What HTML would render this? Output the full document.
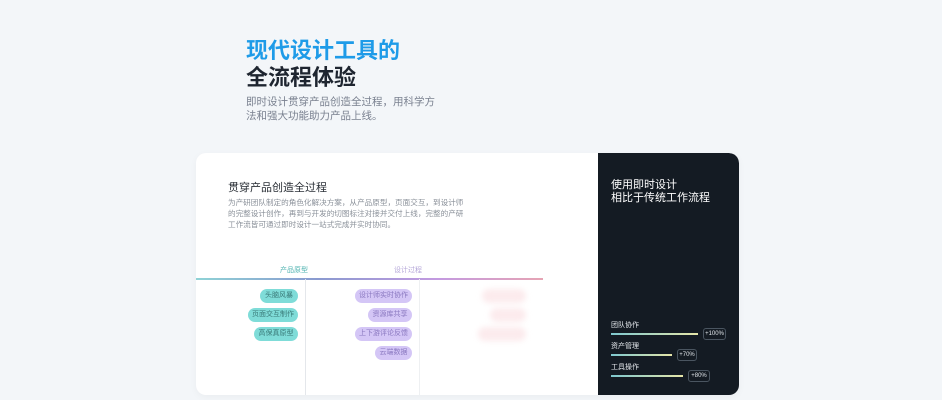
<!DOCTYPE html><html><head><meta charset="utf-8"><style>
*{margin:0;padding:0;box-sizing:border-box}
body{width:942px;height:400px;background:#f3f6f9;font-family:"Liberation Sans","Noto Sans CJK SC",sans-serif;position:relative;overflow:hidden}
.a{position:absolute;white-space:nowrap}
.pill{position:absolute;height:14px;border-radius:7px;font-size:7px;line-height:14px;text-align:center;color:#3a7a78}
.t{background:#7fdcd8}.p{background:#d4c6f6;color:#8a78c0}.r{background:#fcebed;filter:blur(3px)}
.bar{position:absolute;height:2px;background:linear-gradient(90deg,#7fc9d0,#e6e6a8)}
.bd{position:absolute;height:12px;border:1px solid #4a5560;border-radius:3px;font-size:6px;color:#dfe4e8;line-height:10px;text-align:center}
.lb{position:absolute;font-size:7px;color:#e6eaee}
</style></head><body>
<div class="a" style="left:246px;top:33px;font-size:22px;font-weight:bold;color:#1e9be8">现代设计工具的</div>
<div class="a" style="left:246px;top:60px;font-size:22px;font-weight:bold;color:#1e2530">全流程体验</div>
<div class="a" style="left:246px;top:95px;font-size:10.5px;line-height:14px;color:#7a8190">即时设计贯穿产品创造全过程，用科学方<br>法和强大功能助力产品上线。</div>
<div class="a" style="left:196px;top:153px;width:543px;height:242px;background:#fff;border-radius:10px;box-shadow:0 2px 8px rgba(0,0,0,.04);overflow:hidden">
<div class="a" style="left:402px;top:0;width:141px;height:242px;background:#141b23;border-radius:0 10px 0 0"></div>
</div>
<div class="a" style="left:228px;top:179px;font-size:11px;color:#2a2f36">贯穿产品创造全过程</div>
<div class="a" style="left:228px;top:197px;font-size:7.6px;line-height:11px;color:#8a9099">为产研团队制定的角色化解决方案，从产品原型，页面交互，到设计师<br>的完整设计创作，再到与开发的切图标注对接并交付上线，完整的产研<br>工作流皆可通过即时设计一站式完成并实时协同。</div>
<div class="a" style="left:280px;top:265px;font-size:7px;color:#4fb3b0">产品原型</div>
<div class="a" style="left:394px;top:265px;font-size:7px;color:#b4a6d8">设计过程</div>
<div class="a" style="left:196px;top:278px;width:347px;height:1.5px;background:linear-gradient(90deg,#8fd3d6,#8a9ad0 35%,#c49ae0 70%,#e6a4b4)"></div>
<div class="a" style="left:305px;top:279px;width:1px;height:116px;background:#e4e7eb"></div>
<div class="a" style="left:419px;top:279px;width:1px;height:116px;background:#eef0f2"></div>
<div class="pill t" style="left:260px;top:289px;width:38px">头脑风暴</div>
<div class="pill t" style="left:248px;top:308px;width:50px">页面交互制作</div>
<div class="pill t" style="left:254px;top:327px;width:44px">高保真原型</div>
<div class="pill p" style="left:355px;top:289px;width:57px">设计师实时协作</div>
<div class="pill p" style="left:368px;top:308px;width:44px">资源库共享</div>
<div class="pill p" style="left:355px;top:327px;width:57px">上下游评论反馈</div>
<div class="pill p" style="left:375px;top:346px;width:37px">云端数据</div>
<div class="pill r" style="left:482px;top:289px;width:44px"></div>
<div class="pill r" style="left:490px;top:308px;width:36px"></div>
<div class="pill r" style="left:478px;top:327px;width:48px"></div>
<div class="a" style="left:611px;top:179px;font-size:11px;line-height:13px;color:#fff">使用即时设计<br>相比于传统工作流程</div>
<div class="lb" style="left:611px;top:320px">团队协作</div>
<div class="bar" style="left:611px;top:333px;width:87px"></div>
<div class="bd" style="left:703px;top:328px;width:23px">+100%</div>
<div class="lb" style="left:611px;top:341px">资产管理</div>
<div class="bar" style="left:611px;top:354px;width:61px"></div>
<div class="bd" style="left:677px;top:349px;width:20px">+70%</div>
<div class="lb" style="left:611px;top:362px">工具操作</div>
<div class="bar" style="left:611px;top:375px;width:72px"></div>
<div class="bd" style="left:688px;top:370px;width:22px">+80%</div>
</body></html>
